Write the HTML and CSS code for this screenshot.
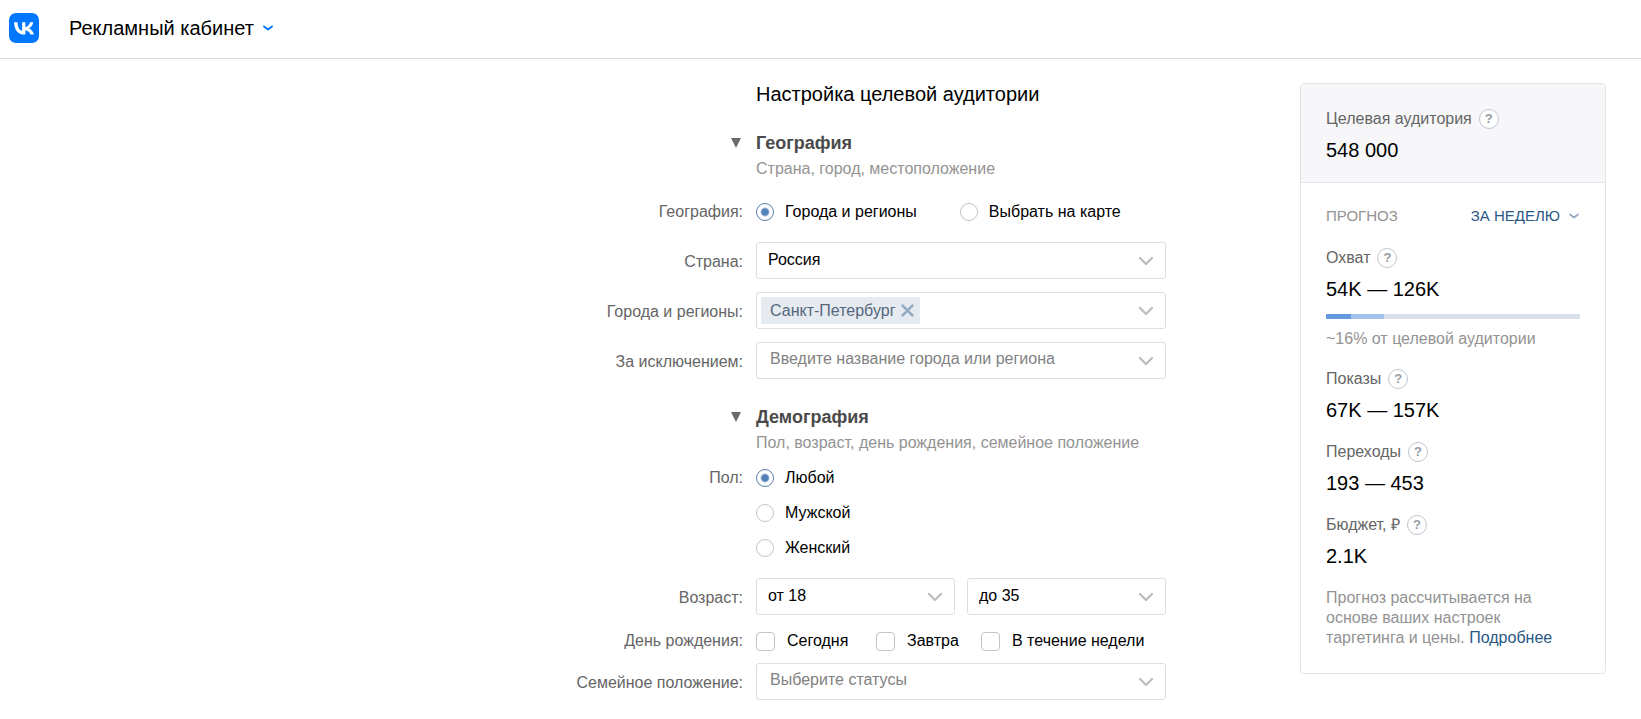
FILE: index.html
```
<!DOCTYPE html>
<html lang="ru">
<head>
<meta charset="utf-8">
<meta name="viewport" content="width=device-width, initial-scale=1">
<title>Рекламный кабинет</title>
<link rel="stylesheet" href="styles.css">
</head>
<body>
<svg class="sprite" aria-hidden="true">
  <symbol id="chevron" viewBox="0 0 16 10"><path d="M2 2l6 6 6-6" fill="none" stroke="currentColor" stroke-width="2.4" stroke-linecap="round" stroke-linejoin="round"/></symbol>
  <symbol id="chevron-small" viewBox="0 0 12 8"><path d="M2 2.400L6 5.600l4-3.200" fill="none" stroke="currentColor" stroke-width="1.900" stroke-linecap="round" stroke-linejoin="round"/></symbol>
  <symbol id="triangle" viewBox="0 0 10 10"><path d="M0 0h10L5 10z" fill="currentColor"/></symbol>
</svg>

<header class="header">
  <a class="logo" href="#" aria-label="VK">
    <svg viewBox="0 0 24 24"><rect width="24" height="24" rx="5.600" fill="#07f"/><path fill="#fff" d="M12.77 17.29c-5.47 0-8.59-3.75-8.72-9.99h2.74c.09 4.58 2.11 6.52 3.71 6.92V7.3h2.58v3.95c1.58-.17 3.24-1.97 3.8-3.95h2.58c-.43 2.44-2.23 4.24-3.51 4.98 1.28.6 3.33 2.17 4.11 5.01h-2.84c-.61-1.9-2.13-3.37-4.14-3.57v3.57z"/></svg>
  </a>
  <button class="cabinet" type="button">Рекламный кабинет <svg class="icon-small"><use href="#chevron-small"/></svg></button>
</header>

<main class="page">
  <form class="form">
    <h1 class="title">Настройка целевой аудитории</h1>

    <section class="section">
      <div class="section-head">
        <button class="toggle" type="button" aria-label="Свернуть раздел География"><svg><use href="#triangle"/></svg></button>
        <h2 class="section-title">География</h2>
        <p class="section-note">Страна, город, местоположение</p>
      </div>

      <div class="row row-geo" role="radiogroup" aria-labelledby="geo-label">
        <span class="label" id="geo-label">География:</span>
        <div class="options">
          <label class="option"><input class="radio" type="radio" name="geo" checked>Города и регионы</label>
          <label class="option"><input class="radio" type="radio" name="geo">Выбрать на карте</label>
        </div>
      </div>

      <div class="fields">
        <div class="row">
          <label class="label label-field" for="country">Страна:</label>
          <div class="field">
            <select class="control" id="country"><option>Россия</option></select>
            <svg class="arrow"><use href="#chevron"/></svg>
          </div>
        </div>
        <div class="row">
          <label class="label label-field" for="cities">Города и регионы:</label>
          <div class="field field-tags">
            <span class="tag">Санкт-Петербург
              <button class="tag-remove" type="button" aria-label="Удалить"><svg viewBox="0 0 12 12"><path d="M1.500 1.500l9 9M10.500 1.500l-9 9" stroke="currentColor" stroke-width="2.400" stroke-linecap="round"/></svg></button>
            </span>
            <input class="tag-input" id="cities" type="text">
            <svg class="arrow"><use href="#chevron"/></svg>
          </div>
        </div>
        <div class="row">
          <label class="label label-field" for="except">За исключением:</label>
          <div class="field">
            <input class="control control-input" id="except" type="text" placeholder="Введите название города или региона">
            <svg class="arrow"><use href="#chevron"/></svg>
          </div>
        </div>
      </div>
    </section>

    <section class="section">
      <div class="section-head">
        <button class="toggle" type="button" aria-label="Свернуть раздел Демография"><svg><use href="#triangle"/></svg></button>
        <h2 class="section-title">Демография</h2>
        <p class="section-note">Пол, возраст, день рождения, семейное положение</p>
      </div>

      <div class="row row-sex" role="radiogroup" aria-labelledby="sex-label">
        <span class="label" id="sex-label">Пол:</span>
        <div class="options options-column">
          <label class="option"><input class="radio" type="radio" name="sex" checked>Любой</label>
          <label class="option"><input class="radio" type="radio" name="sex">Мужской</label>
          <label class="option"><input class="radio" type="radio" name="sex">Женский</label>
        </div>
      </div>

      <div class="row">
        <label class="label label-field" for="age-from">Возраст:</label>
        <div class="pair">
          <div class="field">
            <select class="control" id="age-from"><option>от 18</option></select>
            <svg class="arrow"><use href="#chevron"/></svg>
          </div>
          <div class="field">
            <select class="control" aria-label="Возраст до"><option>до 35</option></select>
            <svg class="arrow"><use href="#chevron"/></svg>
          </div>
        </div>
      </div>

      <div class="row row-birthday" role="group" aria-labelledby="birthday-label">
        <span class="label" id="birthday-label">День рождения:</span>
        <div class="checks">
          <label class="option"><input class="checkbox" type="checkbox">Сегодня</label>
          <label class="option"><input class="checkbox" type="checkbox">Завтра</label>
          <label class="option"><input class="checkbox" type="checkbox">В течение недели</label>
        </div>
      </div>

      <div class="row">
        <label class="label label-field" for="status">Семейное положение:</label>
        <div class="field">
          <input class="control control-input" id="status" type="text" placeholder="Выберите статусы">
          <svg class="arrow"><use href="#chevron"/></svg>
        </div>
      </div>
    </section>
  </form>

  <aside class="card">
    <div class="card-head">
      <div class="metric">
        <h3 class="metric-name">Целевая аудитория <button class="help" type="button">?</button></h3>
        <p class="metric-value">548 000</p>
      </div>
    </div>
    <div class="card-body">
      <div class="forecast">
        <span class="forecast-name">ПРОГНОЗ</span>
        <button class="period" type="button">ЗА НЕДЕЛЮ <svg class="icon-small"><use href="#chevron-small"/></svg></button>
      </div>
      <div class="metric">
        <h3 class="metric-name">Охват <button class="help" type="button">?</button></h3>
        <p class="metric-value">54K — 126K</p>
        <div class="bar"><span class="bar-min" style="width:10%"></span><span class="bar-max" style="width:13%"></span></div>
        <p class="bar-note">~16% от целевой аудитории</p>
      </div>
      <div class="metric">
        <h3 class="metric-name">Показы <button class="help" type="button">?</button></h3>
        <p class="metric-value">67K — 157K</p>
      </div>
      <div class="metric">
        <h3 class="metric-name">Переходы <button class="help" type="button">?</button></h3>
        <p class="metric-value">193 — 453</p>
      </div>
      <div class="metric">
        <h3 class="metric-name">Бюджет, ₽ <button class="help" type="button">?</button></h3>
        <p class="metric-value">2.1K</p>
      </div>
      <p class="card-note">Прогноз рассчитывается на основе ваших настроек таргетинга и цены. <a href="#">Подробнее</a></p>
    </div>
  </aside>
</main>
</body>
</html>
```

FILE: styles.css
```
* {
  box-sizing: border-box;
}

body {
  margin: 0;
  background: #fff;
  color: #000;
  font: 16px/20px "Liberation Sans", Arial, sans-serif;
}

h1, h2, h3, p {
  margin: 0;
  font-weight: normal;
}

button, input, select {
  margin: 0;
  padding: 0;
  border: 0;
  background: none;
  color: inherit;
  font: inherit;
}

button {
  cursor: pointer;
}

svg {
  display: block;
}

.sprite {
  position: absolute;
  width: 0;
  height: 0;
}

.header {
  display: flex;
  align-items: center;
  gap: 30px;
  padding: 13px 9px 15px;
  border-bottom: 1px solid #d7d8d9;
}

.logo svg {
  width: 30px;
  height: 30px;
}

.cabinet {
  display: flex;
  align-items: center;
  gap: 8px;
  font-size: 20px;
}

.icon-small {
  width: 12px;
  height: 8px;
}

.cabinet .icon-small {
  color: #07f;
}

.page {
  display: flex;
  align-items: flex-start;
  gap: 134px;
  padding: 24px 35px 19px 0;
}

.form {
  flex: 1;
}

.title {
  margin-left: calc(100% - 410px);
  font-size: 20px;
  line-height: 22px;
}

.section {
  margin-top: 28px;
}

.section-head,
.row {
  display: grid;
  grid-template-columns: 1fr 410px;
  column-gap: 13px;
}

.section-head {
  row-gap: 6px;
}

.toggle {
  justify-self: end;
  padding: 0 2px;
  color: #6b6c6e;
}

.toggle svg {
  width: 10px;
  height: 10px;
}

.section-title {
  color: #4a4a4a;
  font-size: 18px;
  font-weight: bold;
}

.section-note {
  grid-column: 2;
  color: #939393;
}

.row-geo {
  margin: 23px 0 20px;
}

.row-sex {
  margin: 15px 0 20px;
}

.row-birthday {
  margin: 16px 0 12px;
}

.label {
  color: #656565;
  text-align: right;
}

.label-field {
  padding-top: 10px;
}

.fields {
  display: grid;
  gap: 13px;
}

.options {
  display: flex;
  gap: 43px;
}

.options-column {
  flex-direction: column;
  gap: 15px;
}

.option {
  display: flex;
  align-items: center;
}

.radio,
.checkbox {
  appearance: none;
  flex: none;
  border: 1px solid #c1c5ca;
  background: #fff;
}

.radio {
  width: 18px;
  height: 18px;
  margin-right: 11px;
  border-radius: 50%;
}

.radio:checked {
  border-color: #5b7fa9;
  background: radial-gradient(circle, #5181b8 3px, #fff 5px);
}

.checkbox {
  width: 19px;
  height: 19px;
  margin-right: 12px;
  border-radius: 4px;
}

.checks {
  display: grid;
  grid-template-columns: 120px 105px auto;
}

.pair {
  display: grid;
  grid-template-columns: 1fr 1fr;
  gap: 12px;
}

.field {
  display: grid;
  align-items: center;
  height: 37px;
  border: 1px solid #dcdfe2;
  border-radius: 3px;
}

.field > .control,
.field > .arrow {
  grid-area: 1 / 1;
}

.control {
  appearance: none;
  width: 100%;
  height: 35px;
  padding: 0 40px 2px 11px;
  outline: none;
}

.control-input {
  padding: 0 40px 3px 13px;
}

.control::placeholder {
  color: #828282;
  opacity: 1;
}

.arrow {
  justify-self: end;
  width: 16px;
  height: 10px;
  margin-right: 11px;
  color: #bebebe;
  pointer-events: none;
}

.field-tags {
  grid-template-columns: auto 1fr auto;
}

.field-tags > .arrow {
  grid-area: auto;
}

.tag {
  display: flex;
  align-items: center;
  gap: 6px;
  height: 27px;
  margin-left: 4px;
  padding: 0 6px 0 9px;
  border-radius: 2px;
  background: #e5ebf1;
  color: #55677d;
}

.tag-remove {
  color: #92abc0;
}

.tag-remove svg {
  width: 13px;
  height: 13px;
}

.tag-input {
  width: 100%;
  height: 33px;
  outline: none;
}

.card {
  flex: none;
  width: 306px;
  border: 1px solid #e3e4e8;
  border-radius: 4px;
}

.card-head {
  padding: 25px;
  border-bottom: 1px solid #e3e4e8;
  background: #f7f7fa;
  padding-bottom: 20px;
}

.card-body {
  display: grid;
  gap: 20px;
  padding: 23px 25px 25px;
}

.metric-name {
  display: flex;
  align-items: center;
  gap: 7px;
  color: #656565;
  font-size: 16px;
}

.help {
  width: 20px;
  height: 20px;
  border: 1px solid #c0c6cf;
  border-radius: 50%;
  background: #fff;
  color: #949ba5;
  font-size: 13px;
  font-weight: bold;
  line-height: 18px;
}

.metric-value {
  margin-top: 9px;
  font-size: 20px;
  line-height: 24px;
}

.forecast {
  display: flex;
  justify-content: space-between;
  padding-bottom: 2px;
  color: #939393;
  font-size: 15px;
}

.period {
  display: flex;
  align-items: center;
  gap: 8px;
  color: #2a5885;
}

.period .icon-small {
  color: #9aabbd;
}

.bar {
  display: flex;
  height: 5px;
  margin: 13px 0 10px;
  border-radius: 1px;
  background: #dae0e7;
  overflow: hidden;
}

.bar-min {
  background: #6498e0;
}

.bar-max {
  background: #a3c4ef;
}

.bar-note,
.card-note {
  color: #939393;
}

.card-note a {
  color: #2a5885;
  text-decoration: none;
}
```
